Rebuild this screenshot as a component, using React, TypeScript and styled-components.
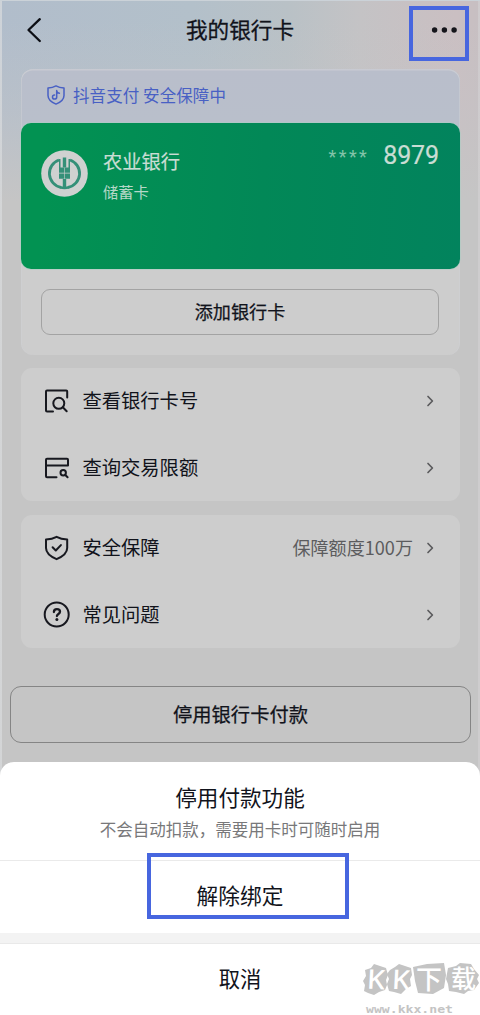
import React from 'react';
import styled, { createGlobalStyle } from 'styled-components';

const Global = createGlobalStyle`
  * { box-sizing: border-box; }
  body { margin: 0; font-family: "Noto Sans CJK SC", "Noto Sans", sans-serif; color: #11131b; }
  button { font: inherit; color: inherit; background: none; border: 0; padding: 0; margin: 0; }
  svg { display: block; flex: none; overflow: visible; }
`;

const Screen = styled.div`
  width: 480px;
  height: 1015px;
  overflow: hidden;
  display: flex;
  flex-direction: column;
  border-top: 1px solid #cbd2d8;
  background:
    linear-gradient(90deg, rgba(218, 220, 222, 0.7) 0 2px, transparent 2px 478px, rgba(212, 210, 212, 0.6) 478px),
    linear-gradient(180deg, rgba(197, 197, 197, 0) 20px, rgba(197, 197, 199, 0.4) 110px, #c5c5c5 200px),
    linear-gradient(90deg, #b1bdcb 0%, #b3c0ca 40%, #b9c1c6 60%, #c4c3c5 75%, #cabfc2 95%, #c7bfc2 100%);
`;

const Header = styled.header`
  height: 68px;
  flex: none;
  display: grid;
  grid-template-columns: 60px 1fr 60px;
  padding-bottom: 10px;
  align-items: center;
`;

const IconButton = styled.button<{ $end?: boolean }>`
  position: relative;
  height: 58px;
  display: flex;
  align-items: center;
  justify-content: ${p => (p.$end ? 'flex-end' : 'flex-start')};
  padding: ${p => (p.$end ? '0 22px 0 0' : '0 0 0 27px')};
`;

const Title = styled.h1`
  margin: 0;
  text-align: center;
  font-size: 21.6px;
  line-height: 30px;
  padding-bottom: 2px;
  font-weight: 400;
  -webkit-text-stroke: 0.3px currentColor;
`;

const Highlight = styled.span<{ $x: number; $y: number; $w: number; $h: number }>`
  position: absolute;
  left: ${p => p.$x}px;
  top: ${p => p.$y}px;
  width: ${p => p.$w}px;
  height: ${p => p.$h}px;
  border: 4px solid #4766df;
`;

const CardPanel = styled.section`
  margin: 0 20px 0 21px;
  height: 286px;
  flex: none;
  border-radius: 12px;
  background: linear-gradient(180deg, #b9becb 0, #b9bfcb 54px, #cdcdcd 150px);
  box-shadow: inset 0 1.5px 0 rgba(207, 209, 213, 0.65), inset -1px 0 0 rgba(207, 209, 213, 0.5), inset 1px 0 0 rgba(207, 209, 213, 0.5);
`;

const Assurance = styled.div`
  height: 54px;
  display: flex;
  align-items: center;
  gap: 8px;
  padding: 0 0 2px 26px;
  color: #4860c4;
  font-size: 16.5px;
  line-height: 24px;
  letter-spacing: 0.08px;
`;

const BankCard = styled.div`
  height: 146px;
  border-radius: 10px;
  padding: 20px 21px 0 20px;
  display: flex;
  align-items: flex-start;
  color: #c9ddd4;
  background: linear-gradient(93deg, #029252 5%, #028857 55%, #02835d 100%);
  box-shadow: 0 0 0 0.5px #a8cfc3;
`;

const BankLogo = styled.svg`
  margin: 7px 15px 0 0;
`;

const BankText = styled.div`
  flex: 1;
  padding-top: 4px;
`;

const BankName = styled.div`
  font-size: 19.3px;
  line-height: 28px;
  -webkit-text-stroke: 0.2px currentColor;
`;

const CardType = styled.div`
  font-size: 15.3px;
  line-height: 22px;
  margin-top: 5px;
  color: #b5d8c8;
`;

const Mask = styled.span`
  font-family: Roboto, sans-serif;
  font-size: 18px;
  line-height: 28px;
  letter-spacing: 2.4px;
  margin: 0 14px 0 0;
  color: #83c4a9;
`;

const Digits = styled.span`
  font-family: Roboto, sans-serif;
  font-size: 25px;
  line-height: 25px;
  letter-spacing: -0.1px;
  -webkit-text-stroke: 0.2px currentColor;
`;

const OutlineButton = styled.button<{ $large?: boolean }>`
  display: block;
  flex: none;
  width: ${p => (p.$large ? 461 : 398)}px;
  height: ${p => (p.$large ? 57 : 46)}px;
  margin: ${p => (p.$large ? '38px 0 0 10px' : '20px 0 0 20px')};
  padding-bottom: ${p => (p.$large ? 2 : 3)}px;
  border: 1px solid ${p => (p.$large ? '#858585' : '#a3a3a3')};
  border-radius: ${p => (p.$large ? 11 : 9)}px;
  font-size: ${p => (p.$large ? 19.3 : 18.1)}px;
  line-height: 28px;
  -webkit-text-stroke: 0.25px currentColor;
`;

const Group = styled.section<{ $gap: number }>`
  margin: ${p => p.$gap}px 20px 0 21px;
  height: 133px;
  flex: none;
  border-radius: 11px;
  background: #cdcdcd;
`;

const Row = styled.div`
  height: 66.5px;
  display: flex;
  align-items: center;
  padding: 0 26px 0 22px;
`;

const RowLabel = styled.span`
  flex: 1;
  margin-left: 11.5px;
  padding-bottom: 2px;
  font-size: 19.3px;
  line-height: 28px;
`;

const RowValue = styled.span`
  margin-right: 13px;
  padding-bottom: 2px;
  font-size: 18.1px;
  line-height: 26px;
  color: #5c5c5e;
`;

const Sheet = styled.section`
  position: relative;
  flex: 1;
  margin-top: 19px;
  border-radius: 14px 14px 0 0;
  background: #fff;
  text-align: center;
`;

const SheetHead = styled.div`
  height: 99px;
  padding-top: 19px;
  border-bottom: 1px solid #eaeaea;
`;

const SheetTitle = styled.div`
  font-size: 21.6px;
  line-height: 32px;
`;

const SheetNote = styled.div`
  font-size: 16.5px;
  line-height: 24px;
  margin-top: 4px;
  color: #78787a;
`;

const SheetAction = styled.button<{ $last?: boolean }>`
  width: 100%;
  height: 72px;
  display: block;
  padding-bottom: 4px;
  font-size: ${p => (p.$last ? 21.3 : 21.7)}px;
  line-height: 32px;
`;

const Divider = styled.div`
  height: 11px;
  background: #f3f3f3;
  border-bottom: 1px solid #e9e9e9;
`;

const Watermark = styled.svg`
  position: absolute;
  left: 360px;
  bottom: 0;
`;

const Chevron = () => (
  <svg width="8" height="12" viewBox="0 0 8 12" fill="none" stroke="#5b5b5d" strokeWidth="1.7" strokeLinecap="round" strokeLinejoin="round">
    <path d="M2 1.5 6.400 6 2 10.500" />
  </svg>
);

const Glyph = ({ children }: { children: React.ReactNode }) => (
  <svg width="28" height="28" viewBox="0 0 28 28" fill="none" stroke="#17181f" strokeWidth="2" strokeLinecap="round" strokeLinejoin="round">
    {children}
  </svg>
);

const ViewIcon = () => (
  <Glyph>
    <path d="M10 24.600H4a1 1 0 0 1-1-1V4.400a1 1 0 0 1 1-1h19.200a1 1 0 0 1 1 1v6.200" />
    <circle cx="15.800" cy="16.300" r="5.500" />
    <path d="m19.800 20.300 3.900 4" />
  </Glyph>
);

const LimitIcon = () => (
  <Glyph>
    <path d="M13.500 23.300H4a1 1 0 0 1-1-1V5.700a1 1 0 0 1 1-1h20a1 1 0 0 1 1 1v5.900H3" />
    <circle cx="20.200" cy="18.700" r="2.700" />
    <path d="m22.300 21 2.300 2.300" />
  </Glyph>
);

const ShieldIcon = () => (
  <Glyph>
    <path d="M13.600 2.800c3 1.600 6.400 2.400 10.600 2.600v8.600c0 5.300-4.900 8.700-10.600 11.200C7.900 22.700 3 19.300 3 14V5.400c4.200-.2 7.600-1 10.600-2.600Z" />
    <path d="m9.600 13.300 3.200 3.200 5.100-5.400" />
  </Glyph>
);

const HelpIcon = () => (
  <Glyph>
    <circle cx="13.700" cy="13.500" r="12" />
    <path d="M10.900 11c0-1.800 1.300-2.800 3-2.800s3.100 1 3.100 2.600c0 2.200-3.100 2.200-3.100 4.300" strokeWidth="2.300" />
    <circle cx="13.900" cy="18.500" r="1.500" fill="#17181f" stroke="none" />
  </Glyph>
);

const PayShield = () => (
  <svg width="18" height="20" viewBox="0 0 18 20" fill="none" stroke="#4860c4" strokeWidth="1.500" strokeLinecap="round" strokeLinejoin="round">
    <path d="M9 .9c2.200 1.200 4.600 1.900 8 2.200v7.300c0 4.200-3.800 6.900-8 8.700-4.200-1.800-8-4.500-8-8.700V3.100C4.400 2.800 6.800 2.100 9 .9Z" />
    <path d="M9.700 5.500v6.600a2.100 2.100 0 1 1-2.100-2.200M9.700 6c.3 1.300 1.200 2.100 2.700 2.200" />
  </svg>
);

const AbcLogo = () => (
  <BankLogo width="47" height="47" viewBox="0 0 47 47">
    <circle cx="23.500" cy="23.500" r="23.300" fill="#cfd1d0" />
    <g fill="none" stroke="#349078">
      <path d="M18 10A14.200 14.200 0 0 0 20 37.400M29 10a14.200 14.200 0 0 1-2 27.400" strokeWidth="2.800" />
      <path d="M19 37.200q4.500 1.500 9 0" strokeWidth="2.500" />
    </g>
    <g fill="#349078">
      <path d="M21.800 7.500h3.400v10h-3.400zM18 9h1.500v10H18zM27.500 9H29v10h-1.500z" />
      <path d="M18 17.500h5.200v5.300H18zM23.800 17.500H29v5.300h-5.200zM18 23.400h5.200v5.300H18zM23.800 23.400H29v5.300h-5.200zM21.800 29h3.400v9h-3.400z" />
    </g>
  </BankLogo>
);

export default function App() {
  return (
    <>
      <Global />
      <Screen>
        <Header>
          <IconButton aria-label="返回">
            <svg width="14" height="24" viewBox="0 0 14 24" fill="none" stroke="#0c0e14" strokeWidth="2.300" strokeLinecap="round" strokeLinejoin="round">
              <path d="M12.800 1.200 1.500 12l11.300 11" />
            </svg>
          </IconButton>
          <Title>我的银行卡</Title>
          <IconButton $end aria-label="更多">
            <svg width="26" height="6" viewBox="0 0 26 6" fill="#15151b">
              <circle cx="2.600" cy="3" r="2.700" />
              <circle cx="12.400" cy="3" r="2.700" />
              <circle cx="22.100" cy="3" r="2.700" />
            </svg>
            <Highlight $x={-11} $y={5} $w={60} $h={55} />
          </IconButton>
        </Header>

        <CardPanel>
          <Assurance>
            <PayShield />
            抖音支付 安全保障中
          </Assurance>
          <BankCard>
            <AbcLogo />
            <BankText>
              <BankName>农业银行</BankName>
              <CardType>储蓄卡</CardType>
            </BankText>
            <Mask>****</Mask>
            <Digits>8979</Digits>
          </BankCard>
          <OutlineButton>添加银行卡</OutlineButton>
        </CardPanel>

        <Group $gap={13}>
          <Row><ViewIcon /><RowLabel>查看银行卡号</RowLabel><Chevron /></Row>
          <Row><LimitIcon /><RowLabel>查询交易限额</RowLabel><Chevron /></Row>
        </Group>

        <Group $gap={14}>
          <Row><ShieldIcon /><RowLabel>安全保障</RowLabel><RowValue>保障额度100万</RowValue><Chevron /></Row>
          <Row><HelpIcon /><RowLabel>常见问题</RowLabel><Chevron /></Row>
        </Group>

        <OutlineButton $large>停用银行卡付款</OutlineButton>

        <Sheet>
          <SheetHead>
            <SheetTitle>停用付款功能</SheetTitle>
            <SheetNote>不会自动扣款，需要用卡时可随时启用</SheetNote>
          </SheetHead>
          <SheetAction>解除绑定</SheetAction>
          <Divider />
          <SheetAction $last>取消</SheetAction>
          <Highlight $x={147} $y={91} $w={202} $h={66} />
          <Watermark width="120" height="60" viewBox="0 0 120 60">
            <g fill="#c4c4c4">
              <path d="m5 14 6-2 3-4 6 2 6 2 2 7-2 5 1 5-2 5-6 2-5 3-6-2-4-2 1-6-2-4 3-5Z" />
              <path d="m30 14 5-3 4-3 6 2 6 2 1 7-2 4 1 7-5 3-5 5-7-2-5-1-2-7 2-5-2-5Z" />
              <path d="m53 11 14-3 17-1 2 12-2 13-11 6-15-1-3-12Z" />
              <path d="m88 12 8-2 4-3 11 1 3 5 5 6-2 4 2 4-5 7-6 1-4 3-8-2-7-1-1-7-2-5Z" />
            </g>
            <g fill="#fff">
              <text x="7" y="33" fontSize="27" fontFamily="Noto Sans, sans-serif" fontWeight="500" textLength="18" lengthAdjust="spacingAndGlyphs" transform="rotate(3 14 24)">K</text>
              <text x="32" y="33" fontSize="27" fontFamily="Noto Sans, sans-serif" fontWeight="500" textLength="18" lengthAdjust="spacingAndGlyphs" transform="rotate(3 38 24)">K</text>
              <text x="56" y="33" fontSize="26" fontFamily="Noto Sans CJK SC, sans-serif" fontWeight="500">下</text>
              <text x="91" y="32" fontSize="25" fontFamily="Noto Sans CJK SC, sans-serif" fontWeight="500">载</text>
            </g>
            <text x="6" y="57" fontSize="11" fill="#c4c4c4" fontFamily="DejaVu Sans Mono, monospace" fontWeight="700" textLength="87" lengthAdjust="spacingAndGlyphs">www.kkx.net</text>
          </Watermark>
        </Sheet>
      </Screen>
    </>
  );
}
